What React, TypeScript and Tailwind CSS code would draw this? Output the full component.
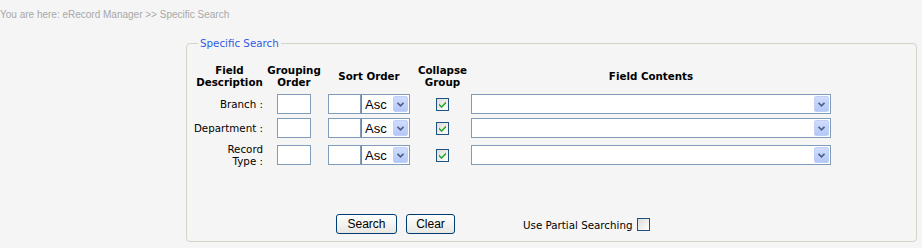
import React from 'react';

const verdana = "font-['DejaVu_Sans',Verdana,sans-serif]";
const arial = "font-['Liberation_Sans',Arial,sans-serif]";
const cols = 'grid grid-cols-[73px_56px_94px_53px_364px] items-center';

const Arrow = () => (
  <span className="flex h-[16px] w-[15px] items-center justify-center rounded-[2px] border border-[#c0cff7] bg-gradient-to-b from-[#cfdcfd] to-[#b4c8f8]">
    <svg width="7" height="5" viewBox="0 0 7 5">
      <path d="M0.5 0.8 L3.5 3.8 L6.5 0.8" stroke="#4d6185" strokeWidth="1.7" fill="none" />
    </svg>
  </span>
);

const Select = ({ value, className }: { value?: string; className: string }) => (
  <div className={`flex h-[20px] items-center justify-between border border-[#7f9db9] bg-white pr-[1px] ${className}`}>
    <span className={`pl-[3px] text-[13px] leading-none text-black ${arial}`}>{value}</span>
    <Arrow />
  </div>
);

const Check = ({ checked }: { checked?: boolean }) => (
  <span className="inline-flex h-[13px] w-[13px] items-center justify-center border border-[#1c5180] bg-gradient-to-br from-[#dcdcd7] to-white">
    {checked && (
      <svg width="7" height="7" viewBox="0 0 7 7">
        <path d="M0 2.5 L0 4.5 L2.5 7 L7 2.5 L7 0.5 L2.5 5 Z" fill="#21a121" />
      </svg>
    )}
  </span>
);

const Row = ({ label, height }: { label: React.ReactNode; height: string }) => (
  <div className={`${cols} ${height}`}>
    <div className={`whitespace-nowrap pr-[3px] text-right text-[10.3px] leading-[12px] text-black ${verdana}`}>{label}</div>
    <div className="flex justify-center">
      <div className="h-[20px] w-[34px] border border-[#7f9db9] bg-white" />
    </div>
    <div className="flex justify-center">
      <div className="h-[20px] w-[33px] border border-[#7f9db9] bg-white" />
      <Select value="Asc" className="w-[49px] border-l-[#6a86a6]" />
    </div>
    <div className="flex justify-center">
      <Check checked />
    </div>
    <div className="flex justify-center">
      <Select className="w-[360px]" />
    </div>
  </div>
);

const Head = ({ children }: { children: React.ReactNode }) => (
  <div className={`whitespace-nowrap text-center text-[10.3px] font-bold leading-[12px] text-black ${verdana}`}>{children}</div>
);

export default function App() {
  return (
    <div className="min-h-[248px] w-full bg-[#f5f5f5]">
      <div className={`pt-[8px] text-[10px] leading-[13px] text-[#a8a8a8] ${arial}`}>
        You are here: eRecord Manager &gt;&gt; Specific Search
      </div>
      <fieldset className="ml-[186px] mt-[16px] w-[731px] rounded-[4px] border border-[#d3d3c6] px-[6px] pb-[7px]">
        <legend className={`ml-[5px] px-[2px] text-[10.3px] leading-[13px] text-[#2f5be6] ${verdana}`}>
          Specific Search
        </legend>
        <div className={`${cols} mt-[14px] h-[24px]`}>
          <Head>Field<br />Description</Head>
          <Head>Grouping<br />Order</Head>
          <Head>Sort Order</Head>
          <Head>Collapse<br />Group</Head>
          <Head>Field Contents</Head>
        </div>
        <div className="mt-[4px]">
          <Row label="Branch :" height="h-[24px]" />
          <Row label="Department :" height="h-[24px]" />
          <Row label={<>Record<br />Type :</>} height="h-[30px]" />
        </div>
        <div className="mt-[44px] flex items-center">
          <div className="ml-[143px] flex gap-[9px]">
            <button className={`h-[20px] w-[61px] rounded-[3px] border border-[#003c74] bg-gradient-to-b from-white to-[#e8e7e1] text-[12px] text-black ${arial}`}>
              Search
            </button>
            <button className={`h-[20px] w-[49px] rounded-[3px] border border-[#003c74] bg-gradient-to-b from-white to-[#e8e7e1] text-[12px] text-black ${arial}`}>
              Clear
            </button>
          </div>
          <div className={`ml-[68px] mt-[3px] flex items-center gap-[5px] text-[10.3px] text-black ${verdana}`}>
            <span>Use Partial Searching</span>
            <span className="-mt-[3px] flex">
              <Check />
            </span>
          </div>
        </div>
      </fieldset>
    </div>
  );
}
